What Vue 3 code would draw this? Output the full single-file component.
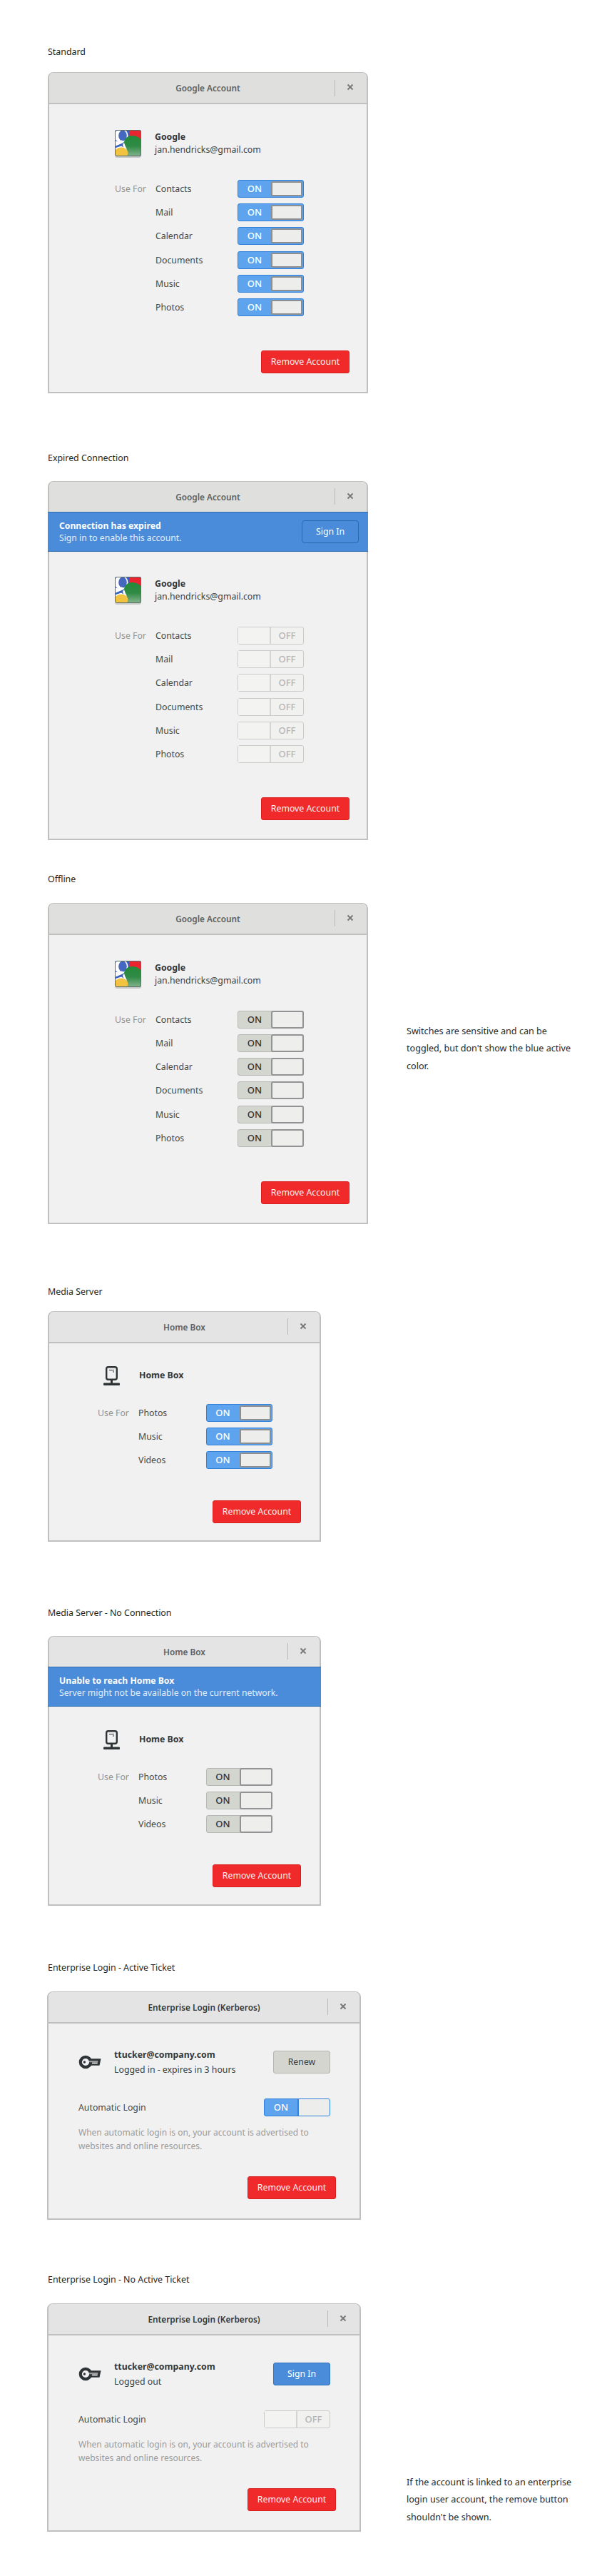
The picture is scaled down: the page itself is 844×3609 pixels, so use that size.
<template>
  <div class="page">
    <section v-for="s in sections" :key="s.id" class="section" :class="s.id">
      <h2 class="section-title">{{ s.title }}</h2>
      <div class="section-row">
        <div class="window" :class="s.kind">
          <header class="titlebar">
            <span class="titlebar-spacer"></span>
            <span class="titlebar-title">{{ s.heading }}</span>
            <span class="titlebar-controls">
              <i class="titlebar-sep"></i>
              <svg class="close-icon" width="10" height="10" viewBox="0 0 10 10">
                <path d="M1.500 1.500l7 7M8.500 1.500l-7 7" stroke="#777a78" stroke-width="2" fill="none" />
              </svg>
            </span>
          </header>

          <div v-if="s.banner" class="banner">
            <div class="banner-text">
              <strong>{{ s.banner.title }}</strong>
              <span>{{ s.banner.text }}</span>
            </div>
            <button v-if="s.banner.action" class="banner-btn">{{ s.banner.action }}</button>
          </div>

          <!-- enterprise accounts have their own layout -->
          <div v-if="s.kind === 'enterprise'" class="body">
            <div class="ticket-row">
              <svg class="key-icon" width="32" height="20" viewBox="0 0 32 20">
                <circle cx="10" cy="10" r="7.200" fill="none" stroke="#2e3436" stroke-width="4.200" />
                <circle cx="8.400" cy="10" r="1.700" fill="#2e3436" />
                <path d="M15 5.200h16.500l-2 9.600H15v-2.600h11.500l.5-1.800H15z" fill="#2e3436" />
                <path d="M15 8h12.500l-.4 2.200H15z" fill="#9a9c9a" />
              </svg>
              <div class="ticket-text">
                <strong>ttucker@company.com</strong>
                <span>{{ s.status }}</span>
              </div>
              <button class="ticket-btn" :class="{ primary: s.action === 'Sign In' }">{{ s.action }}</button>
            </div>
            <div class="auto-row">
              <span class="label">Automatic Login</span>
              <div v-if="s.switchState === 'on'" class="switch on flat"><span>ON</span><i></i></div>
              <div v-else class="switch off"><i></i><span>OFF</span></div>
            </div>
            <p class="help">
              When automatic login is on, your account is advertised to<br />websites and online resources.
            </p>
            <button class="remove">Remove Account</button>
          </div>

          <div v-else class="body">
            <div class="account">
              <svg v-if="s.kind === 'google'" class="google-icon" width="40" height="42" viewBox="0 0 40 42">
                <defs>
                  <linearGradient id="gGreen" x1="0" y1="0" x2="0" y2="1">
                    <stop offset="0" stop-color="#258a3a" />
                    <stop offset="0.5" stop-color="#2f8a45" />
                    <stop offset="1" stop-color="#86b48f" />
                  </linearGradient>
                  <clipPath id="gClip"><rect x="1" y="1" width="37" height="37" rx="3" /></clipPath>
                </defs>
                <rect x="1" y="2" width="37" height="38" rx="3" fill="#8f9492" opacity=".45" />
                <g clip-path="url(#gClip)">
                  <rect x="1" y="1" width="37" height="37" fill="#3a62bd" />
                  <rect x="21" y="1" width="17" height="14" fill="#ea2530" />
                  <ellipse cx="10" cy="9" rx="9.500" ry="10" fill="#fff" />
                  <ellipse cx="12" cy="9" rx="5.800" ry="7.400" fill="#4468bf" />
                  <path d="M1 16c4 2 8 1.500 10-1l2 4-12 5z" fill="#fff" />
                  <path d="M1 26.500l9-3 2.500 1.500c3 2 3.500 6 5.500 13H1z" fill="#fff" />
                  <path d="M13 38c0-10 0-14 1-20 1-6 6-9 11-9 5 0 10 2 13 6v23z" fill="url(#gGreen)" />
                  <path d="M14 18.500c1 5 4 8 4 12 0 3-1 5-2 7.500h-5l3-10-2-6z" fill="#fff" />
                  <ellipse cx="10" cy="33" rx="9.500" ry="7.500" fill="#f2c340" />
                </g>
                <rect x="1.500" y="1.500" width="36" height="36" rx="2.500" fill="none" stroke="#5b6d66" stroke-width="1" />
              </svg>
              <svg v-else class="box-icon" width="23" height="27" viewBox="0 0 23 27">
                <rect x="4.200" y="1.200" width="14.600" height="17.600" rx="2.500" fill="#f1f1f1" stroke="#2e3436" stroke-width="2.400" />
                <path d="M8 5.500h7M13 8h2" stroke="#2e3436" stroke-width="1.200" />
                <path d="M10 20h3v4h-3z" fill="#2e3436" />
                <rect x="0" y="23.500" width="23" height="3.500" rx="1" fill="#2e3436" />
              </svg>
              <div class="account-text">
                <strong>{{ s.name }}</strong>
                <span v-if="s.email">{{ s.email }}</span>
              </div>
            </div>
            <div class="rows">
              <template v-for="(item, i) in s.items" :key="item">
                <span class="use-for">{{ i === 0 ? "Use For" : "" }}</span>
                <span class="label">{{ item }}</span>
                <div v-if="s.switchState === 'on'" class="switch on"><span>ON</span><i></i></div>
                <div v-else-if="s.switchState === 'off'" class="switch off"><i></i><span>OFF</span></div>
                <div v-else class="switch neutral"><span>ON</span><i></i></div>
              </template>
            </div>
            <button class="remove">Remove Account</button>
          </div>
        </div>

        <p v-if="s.note" class="note">
          <span v-for="line in s.note" :key="line">{{ line }}</span>
        </p>
      </div>
    </section>
  </div>
</template>

<script setup>
const services = ["Contacts", "Mail", "Calendar", "Documents", "Music", "Photos"];
const media = ["Photos", "Music", "Videos"];

const google = {
  kind: "google",
  heading: "Google Account",
  name: "Google",
  email: "jan.hendricks@gmail.com",
  items: services,
};
const homeBox = {
  kind: "media",
  heading: "Home Box",
  name: "Home Box",
  items: media,
};
const kerberos = {
  kind: "enterprise",
  heading: "Enterprise Login (Kerberos)",
};

const sections = [
  { ...google, id: "standard", title: "Standard", switchState: "on" },
  {
    ...google,
    id: "expired",
    title: "Expired Connection",
    switchState: "off",
    banner: {
      title: "Connection has expired",
      text: "Sign in to enable this account.",
      action: "Sign In",
    },
  },
  {
    ...google,
    id: "offline",
    title: "Offline",
    switchState: "neutral",
    note: [
      "Switches are sensitive and can be",
      "toggled, but don't show the blue active",
      "color.",
    ],
  },
  { ...homeBox, id: "server", title: "Media Server", switchState: "on" },
  {
    ...homeBox,
    id: "server-off",
    title: "Media Server - No Connection",
    switchState: "neutral",
    banner: {
      title: "Unable to reach Home Box",
      text: "Server might not be available on the current network.",
    },
  },
  {
    ...kerberos,
    id: "ticket",
    title: "Enterprise Login - Active Ticket",
    status: "Logged in - expires in 3 hours",
    action: "Renew",
    switchState: "on",
  },
  {
    ...kerberos,
    id: "no-ticket",
    title: "Enterprise Login - No Active Ticket",
    status: "Logged out",
    action: "Sign In",
    switchState: "off",
    note: [
      "If the account is linked to an enterprise",
      "login user account, the remove button",
      "shouldn't be shown.",
    ],
  },
];
</script>

<style>
body {
  background: #fff;
}
</style>

<style scoped>
.page {
  width: 844px;
  height: 3609px;
  padding: 63px 0 0 67px;
  box-sizing: border-box;
  overflow: hidden;
  font-family: "Noto Sans", sans-serif;
  font-size: 12.3px;
  color: #3b4042;
}
.section-title {
  margin: 0;
  font-size: 12.4px;
  font-weight: 400;
  line-height: 20px;
  color: #1d1f20;
}
.section-row {
  display: flex;
  align-items: flex-start;
}

/* vertical rhythm of the sheet */
.expired { margin-top: 81px; }
.offline { margin-top: 45px; }
.server { margin-top: 85px; }
.server-off { margin-top: 90px; }
.ticket { margin-top: 77px; }
.no-ticket { margin-top: 74px; }
.standard .section-row { margin-top: 18px; }
.expired .section-row { margin-top: 22px; }
.offline .section-row { margin-top: 23px; }
.server .section-row { margin-top: 17px; }
.server-off .section-row { margin-top: 22px; }
.ticket .section-row { margin-top: 23px; }
.no-ticket .section-row { margin-top: 23px; }

.window {
  flex: none;
  box-sizing: border-box;
  background: #f1f1f1;
  border: 2px solid #c0c1bf;
  border-top-width: 1px;
  border-radius: 8px 8px 0 0;
}
.window.google { width: 449px; }
.window.media { width: 383px; }
.window.enterprise { width: 440px; margin-left: -1px; }

.titlebar {
  display: grid;
  grid-template-columns: 45px 1fr 45px;
  align-items: center;
  box-sizing: border-box;
  height: 44px;
  background: #dfe0dd;
  border-radius: 7px 7px 0 0;
  border-bottom: 2px solid #c0c1bf;
}
.media .titlebar,
.enterprise .titlebar {
  background: #e4e4e4;
}
.titlebar-title {
  text-align: center;
  font-size: 11.8px;
  font-weight: 600;
  color: #5d6062;
}
.enterprise .titlebar-title {
  color: #35393b;
}
.titlebar-controls {
  display: flex;
  align-items: center;
  height: 23px;
}
.titlebar-sep {
  width: 1px;
  height: 23px;
  background: #b9bab8;
}
.close-icon {
  margin-left: 16px;
  margin-top: -2px;
}

.banner {
  display: flex;
  align-items: center;
  justify-content: space-between;
  box-sizing: border-box;
  height: 56px;
  margin: -2px -2px 0;
  padding: 0 13px 0 16px;
  background: #4a8cd9;
  border-top: 1px solid #2e6cb0;
  border-bottom: 1px solid #2e6cb0;
  color: #fff;
}
.banner-text {
  display: flex;
  flex-direction: column;
  line-height: 17px;
}
.banner-text strong {
  font-weight: 700;
  font-size: 12.2px;
}
.banner-text span {
  font-size: 12.2px;
  color: #e4eefa;
}
.banner-btn {
  width: 80px;
  height: 32px;
  padding: 0;
  font: inherit;
  color: #fff;
  background: #4a8cd9;
  border: 1px solid #2a69af;
  border-radius: 4px;
}

.account {
  display: flex;
  align-items: center;
  padding-top: 35px;
  padding-left: 92px;
  height: 40px;
}
.expired .account {
  padding-top: 34px;
}
.google-icon {
  flex: none;
  align-self: flex-start;
  margin-right: 17px;
  margin-left: -1px;
}
.account-text {
  display: flex;
  flex-direction: column;
  line-height: 18px;
}
.account-text strong,
.ticket-text strong {
  font-weight: 700;
  color: #33383a;
}
.media .account {
  height: 27px;
  padding-top: 32px;
  padding-left: 76px;
}
.server-off .media .account {
  padding-top: 33px;
}
.box-icon {
  flex: none;
  margin-right: 27px;
}

.rows {
  display: grid;
  grid-template-columns: 57px 115px 93px;
  grid-auto-rows: 25px;
  row-gap: 8.200px;
  align-items: center;
  margin-top: 31px;
  margin-left: 92px;
}
.media .rows {
  grid-template-columns: 57px 94.500px 93px;
  margin-left: 68px;
  margin-top: 26px;
}
.use-for {
  color: #939393;
}
.label {
  color: #43484a;
}

.switch {
  display: flex;
  box-sizing: border-box;
  width: 93px;
  height: 25px;
  border-radius: 3px;
  font-size: 13px;
  font-weight: 500;
  line-height: 23px;
}
.switch span {
  flex: 1;
  text-align: center;
}
.switch i {
  display: block;
  flex: none;
  box-sizing: border-box;
}
.switch.on {
  background: #5ea3ee;
  border: 1px solid #3080da;
  color: #fff;
}
.switch.on i {
  width: 44px;
  margin: 1px 1px 1px 0;
  background: #ededeb;
  border: 2px solid #8c8e90;
  border-radius: 2px;
}
.switch.on.flat i {
  width: 45px;
  margin: 0;
  border: 0;
  border-left: 2px solid #3583dc;
  border-radius: 0 2px 2px 0;
}
.switch.neutral {
  background: #d3d5cf;
  border: 1px solid #b7b8b3;
  color: #2e3436;
}
.switch.neutral i {
  width: 46px;
  margin: -1px -1px -1px 0;
  background: #eeeeec;
  border: 2px solid #929394;
  border-radius: 3px;
}
.switch.off {
  background: #f1f1ef;
  border: 1px solid #cbcbc9;
  color: #b5b5b5;
}
.switch.off i {
  width: 46px;
  background: #f3f3f1;
  border-right: 2px solid #d4d4d2;
}

.remove {
  display: block;
  width: 124px;
  height: 32px;
  padding: 0;
  margin: 48px 24px 26px auto;
  font: inherit;
  color: #fff0f0;
  background: #f0292b;
  border: 1px solid #d9201f;
  border-radius: 3px;
}
.media .remove {
  margin: 43.500px 26px 24px auto;
}

.enterprise .body {
  padding: 38px 41px 0 42px;
}
.ticket-row {
  display: flex;
  align-items: center;
  height: 32px;
}
.key-icon {
  flex: none;
  margin-right: 18px;
}
.ticket-text {
  display: flex;
  flex: 1;
  flex-direction: column;
  line-height: 21px;
}
.ticket-btn {
  width: 80px;
  height: 32px;
  padding: 0;
  font: inherit;
  color: #3b4042;
  background: #d3d5ce;
  border: 1px solid #b4b5af;
  border-radius: 3px;
}
.ticket-btn.primary {
  color: #fff;
  background: #4a8cd9;
  border-color: #2f72bd;
}
.auto-row {
  display: flex;
  align-items: center;
  justify-content: space-between;
  height: 25px;
  margin-top: 35px;
}
.help {
  margin: 13.500px 0 0;
  font-size: 12px;
  line-height: 19px;
  color: #9b9b9b;
}
.enterprise .remove {
  margin: 32.500px -8px 27px auto;
}

.note {
  display: flex;
  flex-direction: column;
  margin: 0 0 0 54px;
  font-size: 12.6px;
  line-height: 24.500px;
  color: #24282a;
  white-space: nowrap;
}
.offline .note {
  margin-top: 168px;
}
.no-ticket .note {
  margin-top: 239px;
  margin-left: 64px;
}
</style>
